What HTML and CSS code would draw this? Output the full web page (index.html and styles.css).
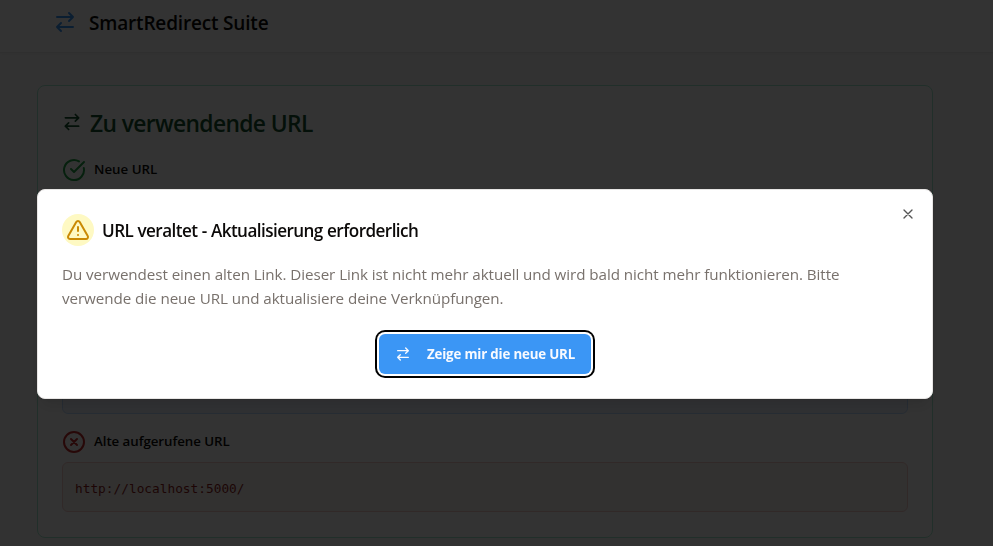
FILE: index.html
```
<!DOCTYPE html>
<html lang="de">
<head>
<meta charset="utf-8">
<title>SmartRedirect Suite</title>
<link rel="stylesheet" href="styles.css">
</head>
<body>
<svg class="sprite" aria-hidden="true">
  <symbol id="swap" viewBox="0 0 24 24"><path d="m16 3 4 4-4 4M20 7H4M8 21l-4-4 4-4M4 17h16"/></symbol>
</svg>
<header class="header">
  <svg class="icon header-icon"><use href="#swap"/></svg>
  <span class="brand">SmartRedirect Suite</span>
</header>
<main class="card">
  <h1 class="card-title"><svg class="icon title-icon"><use href="#swap"/></svg><span>Zu verwendende URL</span></h1>
  <section class="entry first">
    <div class="label">
      <svg class="icon status ok" viewBox="0 0 24 24"><path d="M21.8 10A10 10 0 1 1 17 3.34"/><path d="m9 11 3 3L22 4"/></svg>
      <span class="label-new">Neue URL</span>
    </div>
    <div class="url-box new"></div>
  </section>
  <section class="entry">
    <div class="label">
      <svg class="icon status bad" viewBox="0 0 24 24"><circle cx="12" cy="12" r="10"/><path d="m15 9-6 6M9 9l6 6"/></svg>
      <span class="label-old">Alte aufgerufene URL</span>
    </div>
    <div class="url-box old"><code>http://localhost:5000/</code></div>
  </section>
</main>
<div class="overlay">
  <div class="dialog" role="dialog">
    <button class="close" aria-label="Schließen"><svg class="icon" viewBox="0 0 24 24"><path d="M18 6 6 18M6 6l12 12"/></svg></button>
    <div class="dialog-head">
      <span class="warn"><svg class="icon" viewBox="0 0 24 24"><path d="m21.73 18-8-14a2 2 0 0 0-3.48 0l-8 14A2 2 0 0 0 4 21h16a2 2 0 0 0 1.73-3M12 9v4M12 17h.01"/></svg></span>
      <h2>URL veraltet - Aktualisierung erforderlich</h2>
    </div>
    <p>Du verwendest einen alten Link. Dieser Link ist nicht mehr aktuell und wird bald nicht mehr funktionieren. Bitte<br>verwende die neue URL und aktualisiere deine Verknüpfungen.</p>
    <button class="action"><svg class="icon"><use href="#swap"/></svg><span>Zeige mir die neue URL</span></button>
  </div>
</div>
</body>
</html>
```
FILE: styles.css
```
* { box-sizing: border-box; }
html, body { height: 100%; }
body {
  margin: 0;
  overflow: hidden;
  background: #fafafa;
  color: #0c0a09;
  font-family: "Segoe UI", "Open Sans", "Noto Sans", sans-serif;
}
h1, h2, p { margin: 0; }
.sprite { display: none; }
.icon {
  flex: none;
  fill: none;
  stroke: currentColor;
  stroke-width: 2;
  stroke-linecap: round;
  stroke-linejoin: round;
}
.header {
  display: flex;
  align-items: center;
  gap: 12px;
  height: 53px;
  padding: 0 53px 8px;
  background: #fff;
  border-bottom: 1px solid #e9e9e9;
  box-shadow: 0 1px 2px rgba(0, 0, 0, .05);
}
.header-icon { width: 24px; height: 24px; color: #3b96f5; }
.brand { padding-top: 2px; font-size: 19px; font-weight: 600; line-height: 28px; letter-spacing: -.18px; white-space: nowrap; }
.card {
  width: 896px;
  height: 453px;
  margin: 32px 0 0 37px;
  padding: 21px 24px;
  border: 1px solid #a7ebd0;
  border-radius: 8px;
  background: #fff;
}
.card-title {
  display: flex;
  align-items: center;
  gap: 8px;
  height: 32px;
  font-size: 22.8px;
  font-weight: 600;
  color: #14532d;
  letter-spacing: -.62px;
  white-space: nowrap;
}
.card-title span { padding-top: 1px; }
.title-icon { width: 20px; height: 20px; margin-bottom: 2px; }
.entry { margin-top: 16px; }
.entry.first { margin-top: 19px; }
.label { display: flex; align-items: center; gap: 8px; height: 24px; font-size: 13.3px; font-weight: 600; }
.label span { padding-bottom: 2px; white-space: nowrap; }
.label-old { letter-spacing: -.05px; }
.status { width: 24px; height: 24px; }
.ok { color: #22a045; }
.bad { color: #c42b2b; }
.url-box { margin-top: 8px; border-radius: 6px; border: 1px solid; }
.url-box.new { height: 224px; background: #f0f5fb; border-color: #bfdbfe; }
.url-box.old { height: 50px; padding: 13px 12px; background: #faf5ef; border-color: #f5cac7; color: #8f1d1d; }
code { display: block; font: 12.8px/26px Consolas, "DejaVu Sans Mono", monospace; }
.overlay {
  position: fixed;
  inset: 0;
  display: flex;
  align-items: flex-start;
  padding: 189px 0 0 37px;
  background: rgba(0, 0, 0, .8);
}
.dialog {
  position: relative;
  display: flex;
  flex-direction: column;
  width: 896px;
  height: 210px;
  padding: 24px;
  border: 1px solid #e7e5e4;
  border-radius: 8px;
  background: #fff;
  box-shadow: 0 10px 15px -3px rgba(0, 0, 0, .1), 0 4px 6px -4px rgba(0, 0, 0, .1);
}
button { border: 0; padding: 0; background: none; font-family: inherit; }
.close { position: absolute; top: 16px; right: 16px; width: 16px; height: 16px; color: #555; }
.close .icon { display: block; width: 16px; height: 16px; }
.dialog-head { display: flex; align-items: center; gap: 8px; height: 32px; }
.warn { display: grid; place-items: center; width: 32px; height: 32px; border-radius: 50%; background: #fef9c3; color: #ca8a04; }
.warn .icon { width: 24px; height: 24px; }
h2 { padding-top: 1px; font-size: 17.1px; line-height: 28px; font-weight: 600; letter-spacing: -.56px; word-spacing: .4px; white-space: nowrap; }
p { margin-top: 16px; font-size: 15.2px; line-height: 24px; color: #78716c; letter-spacing: -.07px; white-space: nowrap; }
.action {
  display: flex;
  align-items: center;
  align-self: center;
  width: 212px;
  height: 40px;
  margin-top: 24px;
  padding: 0 16px;
  gap: 16px;
  border-radius: 6px;
  background: #3b96f5;
  color: #f8faff;
  box-shadow: 0 0 0 2px #fff, 0 0 0 4px #000;
  font-size: 13.3px;
  font-weight: 700;
  letter-spacing: -.17px;
  white-space: nowrap;
}
.action .icon { width: 16px; height: 16px; }
```
